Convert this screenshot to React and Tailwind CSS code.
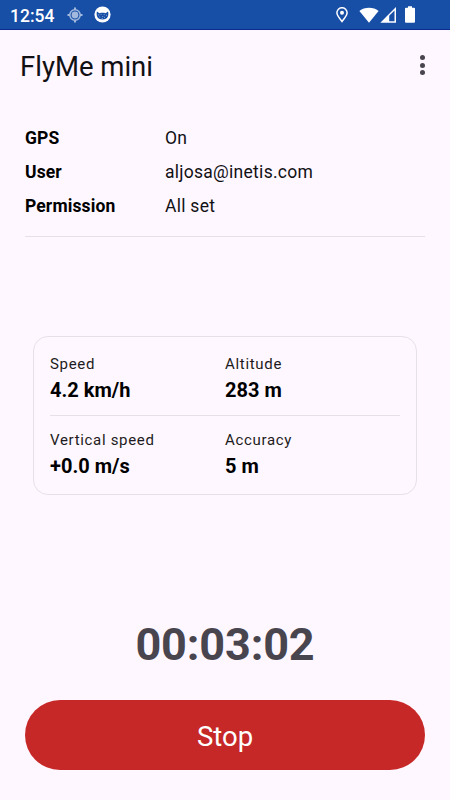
import React from "react";

const details = [
  { label: "GPS", value: "On" },
  { label: "User", value: "aljosa@inetis.com" },
  { label: "Permission", value: "All set" },
];

function StatusBar() {
  return (
    <div className="flex h-[30px] items-center border-b border-[#0b2c8c] bg-[#174ea6] text-white">
      <span className="ml-[10px] w-[57px] pt-[2px] text-[17.5px] leading-[20px] font-medium">12:54</span>
      <svg className="h-4 w-4" viewBox="0 0 16 16" fill="none" stroke="#a2b9dd">
        <circle cx="8" cy="8" r="5.2" strokeWidth="1.5" />
        <circle cx="8" cy="8" r="3.4" fill="#a2b9dd" stroke="none" />
        <path d="M8 .5v2.500M8 13v2.500M.5 8H3M13 8h2.500" strokeWidth="2" />
      </svg>
      <svg className="ml-[11px] h-[17px] w-[17px]" viewBox="0 0 17 17">
        <circle cx="8.5" cy="8.5" r="8.1" fill="#fff" />
        <path d="M3 5.500 5.400 7.300l1.500-.5h3.200l1.500.5L14 5.500c.4 1.300.5 3.300 0 4.800-.9 2.100-2.800 3.300-5.500 3.300s-4.600-1.200-5.500-3.300c-.5-1.500-.4-3.500 0-4.800Z" fill="#174ea6" />
        <path d="M3.900 8.900h1.400M6.600 8.300h1M9.700 8.600h1M12 9.300h1M5.200 10.700l1 .7M8.200 10.500h1M11 11l-1 .8M7.500 12.700h1.500" stroke="#9db5df" strokeWidth=".8" />
      </svg>
      <div className="grow" />
      <svg className="h-4 w-3" viewBox="0 0 12 16" fill="none" stroke="#fff">
        <path d="M6 14.500C3.400 11.400.9 8.400.9 5.800a5.100 5.100 0 0 1 10.200 0C11.100 8.400 8.600 11.400 6 14.500Z" strokeWidth="1.500" />
        <circle cx="6" cy="5.700" r="2" fill="#fff" stroke="none" />
      </svg>
      <svg className="ml-[11px] h-4 w-5" viewBox="0 0 20 16" fill="#fff">
        <path d="M.4 4C5.500-.2 14.500-.2 19.600 4L10 15.700Z" />
      </svg>
      <svg className="ml-[1px] h-4 w-4" viewBox="0 0 16 16">
        <path d="M.3 15.700 16 0v15.700Z" fill="#fff" />
        <path d="M9.200 8.700 14.500 3.600v10.600H9.200Z" fill="#174ea6" />
      </svg>
      <svg className="mr-[35px] ml-[9px] h-[17px] w-[10px]" viewBox="0 0 10 17" fill="#fff">
        <path d="M3 .3h4v1.500h2q1 0 1 1v13q0 1-1 1H1q-1 0-1-1v-13q0-1 1-1h2Z" />
      </svg>
    </div>
  );
}

function Metric({ label, value }) {
  return (
    <div>
      <div className="text-[15px] leading-[20px] tracking-[0.68px] text-[#1d1b20]">{label}</div>
      <div className="mt-[4px] text-[20px] leading-[25px] font-bold tracking-[0.02px] text-black">{value}</div>
    </div>
  );
}

export default function App() {
  return (
    <main className="flex h-[800px] w-[450px] flex-col overflow-hidden bg-[#fef7ff] font-[Roboto,sans-serif]">
      <StatusBar />
      <header className="flex h-[72px] items-center justify-between pr-[25px] pl-5">
        <h1 className="text-[27.5px] leading-[35px] font-normal text-[#111014]">FlyMe mini</h1>
        <button aria-label="More options" className="flex flex-col gap-[2.5px] pb-[2px]">
          <span className="h-[5px] w-[5px] rounded-full bg-[#49454f]" />
          <span className="h-[5px] w-[5px] rounded-full bg-[#49454f]" />
          <span className="h-[5px] w-[5px] rounded-full bg-[#49454f]" />
        </button>
      </header>
      <section className="mx-[25px] mt-[19px] h-[116px] border-b border-[#e6e0e9] pt-px">
        {details.map(({ label, value }) => (
          <div key={label} className="flex h-[33.75px] items-center text-[17.5px] leading-[25px]">
            <span className="w-[140px] font-bold tracking-[0.12px] text-black">{label}</span>
            <span className="tracking-[0.27px] text-[#111014]">{value}</span>
          </div>
        ))}
      </section>
      <section className="mx-[33px] mt-[99px] h-[159px] rounded-[15px] border border-[#e6e0e9] px-4">
        <div className="grid h-[79px] grid-cols-2 border-b border-[#e6e0e9] pt-[17px]">
          <Metric label="Speed" value="4.2 km/h" />
          <Metric label="Altitude" value="283 m" />
        </div>
        <div className="grid grid-cols-2 pt-[14px]">
          <Metric label="Vertical speed" value="+0.0 m/s" />
          <Metric label="Accuracy" value="5 m" />
        </div>
      </section>
      <div className="mt-[125px] h-[50px] text-center text-[45px] leading-[50px] font-bold tracking-[-0.15px] text-[#49454f]">00:03:02</div>
      <button className="mx-[25px] mt-[30px] h-[70px] shrink-0 rounded-full bg-[#c62828] pt-[2px] text-[27.5px] leading-[35px] text-white">Stop</button>
    </main>
  );
}
